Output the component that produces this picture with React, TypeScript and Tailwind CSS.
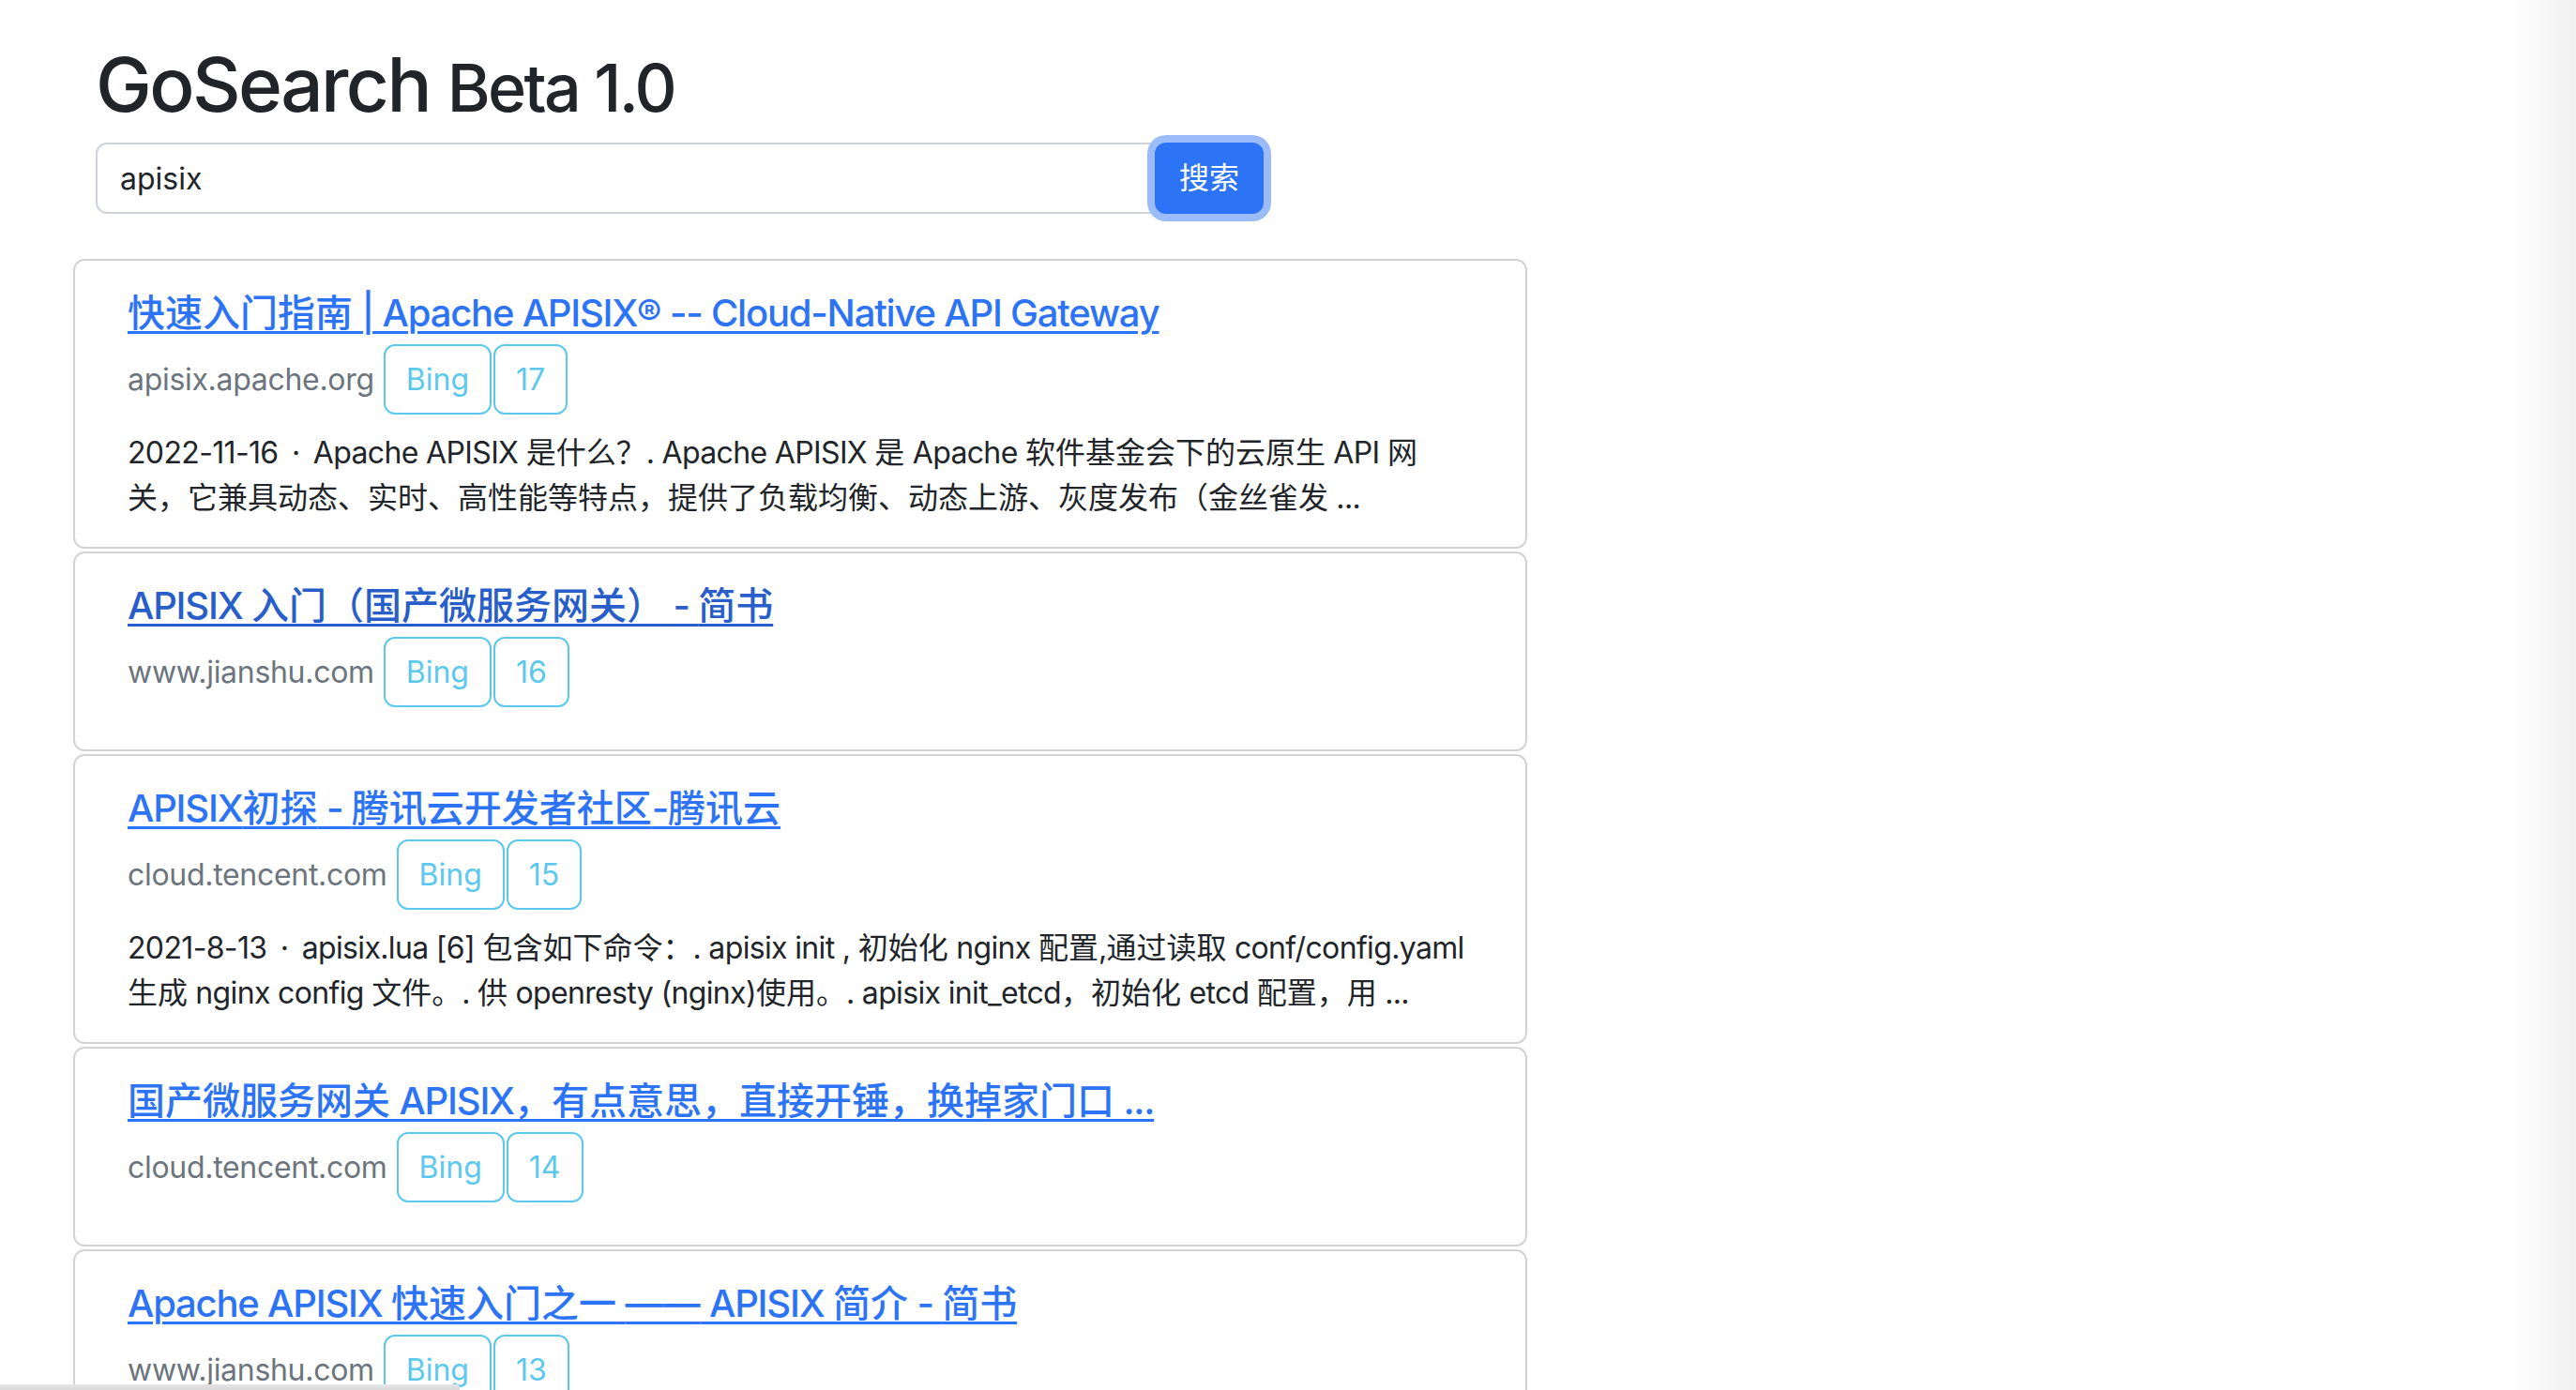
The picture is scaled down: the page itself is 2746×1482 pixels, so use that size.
import React from "react";

type Result = {
  title: string;
  domain: string;
  count: number;
  lines: React.ReactNode[];
  hover?: boolean;
};

const CJK = /([\u2014\u3000-\u303f\u4e00-\u9fff\uff00-\uffef]+)/;

function T({ text }: { text: string }) {
  const parts = text.split(CJK);
  return (
    <>
      {parts.map((p, i) =>
        i % 2 === 1 ? (
          <span key={i} className="tracking-normal">
            {p}
          </span>
        ) : (
          <React.Fragment key={i}>{p}</React.Fragment>
        )
      )}
    </>
  );
}

const Dot = () => <span className="mx-[6px]">·</span>;

const results: Result[] = [
  {
    title: "快速入门指南 | Apache APISIX® -- Cloud-Native API Gateway",
    domain: "apisix.apache.org",
    count: 17,
    lines: [
      <>
        2022-11-16 <Dot /> <T text="Apache APISIX 是什么？. Apache APISIX 是 Apache 软件基金会下的云原生 API 网" />
      </>,
      <T text="关，它兼具动态、实时、高性能等特点，提供了负载均衡、动态上游、灰度发布（金丝雀发 ..." />,
    ],
  },
  {
    title: "APISIX 入门（国产微服务网关） - 简书",
    domain: "www.jianshu.com",
    count: 16,
    lines: [],
    hover: true,
  },
  {
    title: "APISIX初探 - 腾讯云开发者社区-腾讯云",
    domain: "cloud.tencent.com",
    count: 15,
    lines: [
      <>
        2021-8-13 <Dot /> <T text="apisix.lua [6] 包含如下命令：. apisix init , 初始化 nginx 配置,通过读取 conf/config.yaml" />
      </>,
      <T text="生成 nginx config 文件。. 供 openresty (nginx)使用。. apisix init_etcd，初始化 etcd 配置，用 ..." />,
    ],
  },
  {
    title: "国产微服务网关 APISIX，有点意思，直接开锤，换掉家门口 ...",
    domain: "cloud.tencent.com",
    count: 14,
    lines: [],
  },
  {
    title: "Apache APISIX 快速入门之一 —— APISIX 简介 - 简书",
    domain: "www.jianshu.com",
    count: 13,
    lines: [],
  },
];

function Badge({ children }: { children: React.ReactNode }) {
  return (
    <span className="inline-flex h-[75px] items-center rounded-[12px] border-2 border-[#5cc8ee] px-[22px] text-[32px] leading-[48px] text-[#5cc8ee]">
      {children}
    </span>
  );
}

function Card({ r }: { r: Result }) {
  return (
    <div className="rounded-[12px] border-2 border-[#d3d3d3] bg-white pb-[28px] pl-[56px] pr-[32px] pt-[32px]">
      <a
        href="#"
        className={
          "block whitespace-nowrap text-[40px] font-medium leading-[48px] tracking-[-1.2px] underline decoration-[3px] underline-offset-[5px] " +
          (r.hover ? "text-[#285ec9]" : "text-[#2c74f5]")
        }
      >
        <T text={r.title} />
      </a>
      <div className="mt-[9px] flex h-[75px] items-center">
        <span className="text-[32px] leading-[48px] tracking-[-0.3px] text-[#6c757d]">{r.domain}</span>
        <span className="ml-[10px] flex gap-[2px]">
          <Badge>Bing</Badge>
          <Badge>{r.count}</Badge>
        </span>
      </div>
      <div className="mt-[17px] text-[32px] leading-[48px] tracking-[-0.65px] text-[#212529]">
        {r.lines.map((l, i) => (
          <div key={i} className="whitespace-nowrap">
            {l}
          </div>
        ))}
      </div>
    </div>
  );
}

export default function App() {
  return (
    <div
      className="relative h-[1482px] w-[2746px] overflow-hidden bg-white text-[#212529]"
      style={{ fontFamily: "Inter, 'Noto Sans CJK SC', sans-serif" }}
    >
      <div className="pl-[102px] pt-[42px]">
        <h1 className="whitespace-nowrap text-[80px] font-medium leading-[96px] tracking-[-2.6px] text-[#212529]">
          GoSearch <span className="text-[70px]">Beta 1.0</span>
        </h1>
        <div className="mt-[10px] flex w-[1245px]">
          <input
            defaultValue="apisix"
            readOnly
            className="h-[76px] w-[1131px] rounded-l-[12px] border-2 border-r-0 border-[#ced4da] bg-white pl-[24px] text-[32px] text-[#212529] outline-none"
          />
          <button className="relative z-10 -ml-[2px] h-[76px] w-[116px] rounded-[12px] bg-[#2c74f5] text-[32px] text-white shadow-[0_0_0_8px_#9bbcf9]">
            搜索
          </button>
        </div>
      </div>

      <div className="ml-[78px] mt-[48px] flex w-[1550px] flex-col gap-[3px]">
        {results.map((r, i) => (
          <Card key={i} r={r} />
        ))}
      </div>

      <div className="pointer-events-none absolute right-0 top-0 h-full w-[70px] bg-gradient-to-r from-transparent to-[#f1f1f1]" />
      <div className="pointer-events-none absolute bottom-0 left-0 h-[6px] w-[490px] rounded-tr-[4px] bg-gradient-to-b from-[#e6e6e6] to-[#d8d8d8]" />
    </div>
  );
}
